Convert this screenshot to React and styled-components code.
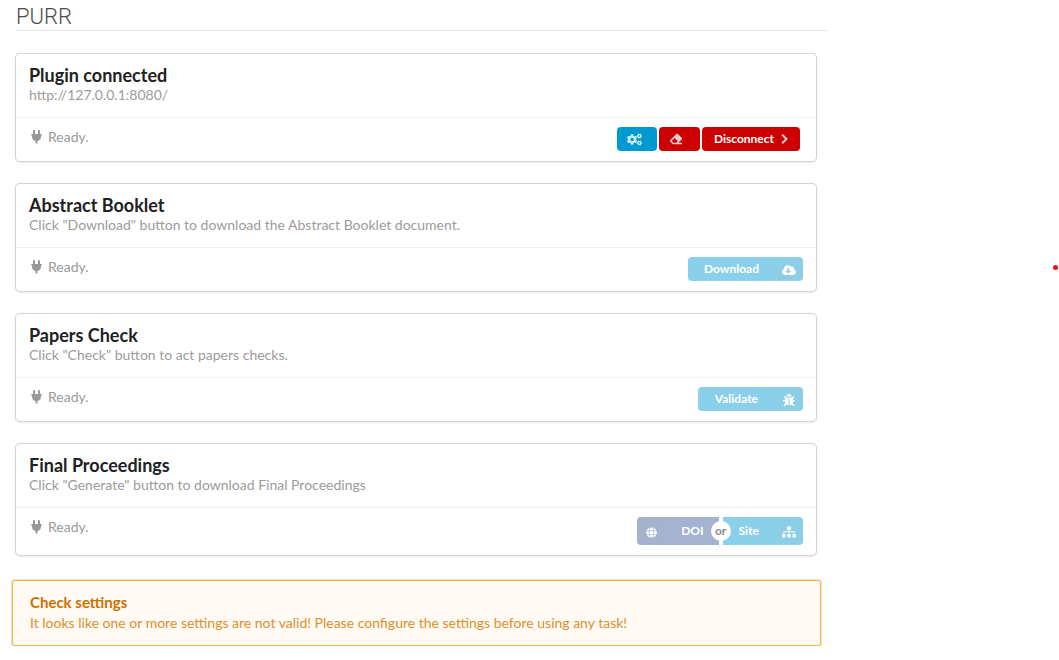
import React from "react";
import styled, { createGlobalStyle } from "styled-components";
import {
  FaCogs,
  FaEraser,
  FaCloudDownloadAlt,
  FaBug,
  FaGlobe,
  FaSitemap,
} from "react-icons/fa";

const GlobalStyle = createGlobalStyle`
  *, *::before, *::after { box-sizing: border-box; }
  body {
    margin: 0;
    background: #fff;
    color: #212121;
    font-family: Lato, "Open Sans", sans-serif;
    font-size: 14px;
    line-height: 20px;
  }
  h1, h2, p { margin: 0; }
`;

const Page = styled.div`
  display: grid;
  grid-template-columns: minmax(0, 1fr) 231px;
`;

const Main = styled.main`
  display: flex;
  flex-direction: column;
  padding-left: 16px;
`;

const Margin = styled.aside`
  display: flex;
  justify-content: flex-end;
  padding: 265px 1px 0 0;
`;

const Dot = styled.span`
  width: 5px;
  height: 5px;
  border-radius: 50%;
  background: #ee1111;
`;

const PageTitle = styled.h1`
  padding: 5px 0 1px;
  border-bottom: 1px solid #e8e8e8;
  color: #4c4c4c;
  font-family: Roboto, sans-serif;
  font-size: 22px;
  font-weight: 300;
  line-height: 24px;
`;

const Cards = styled.div`
  display: flex;
  flex-direction: column;
  gap: 23px;
  margin: 23px 12px 0 0;
`;

const Card = styled.section`
  border-radius: 4px;
  background: #fff;
  box-shadow: 0 1px 3px 0 #d4d4d5, 0 0 0 1px #d4d4d5;
`;

const CardContent = styled.div`
  padding: 10px 13px 13px;
`;

const CardTitle = styled.h2`
  color: #212121;
  font-size: 18px;
  font-weight: 700;
  line-height: 22px;
`;

const CardText = styled.p`
  color: #9b9b9b;
  line-height: 18px;
`;

const CardFooter = styled.div`
  display: flex;
  align-items: flex-start;
  justify-content: space-between;
  padding: 9px 13px 10px 15px;
  border-top: 1px solid #f0f0f0;
`;

const Status = styled.p`
  display: flex;
  align-items: center;
  gap: 6px;
  color: #999;
`;

const Actions = styled.div`
  display: flex;
  gap: ${(p) => p.$gap || 0}px;
  padding-right: ${(p) => p.$inset || 0}px;
`;

const Button = styled.button`
  display: flex;
  align-items: center;
  height: ${(p) => (p.$tall ? 28 : 24)}px;
  padding: ${(p) => p.$padding || "0"};
  border: 0;
  border-radius: ${(p) => p.$radius || "4px"};
  overflow: hidden;
  background: ${(p) => p.$color};
  color: #fff;
  font-family: inherit;
  font-size: 12px;
  font-weight: 700;
  line-height: 12px;

  &:disabled {
    opacity: 0.45;
  }
`;

const FaintIcon = styled.span`
  display: flex;
  opacity: 0.8;
`;

const ButtonLabel = styled.span`
  flex: 1;
  padding: ${(p) => p.$padding};
`;

const IconBox = styled.span`
  display: flex;
  align-items: center;
  justify-content: center;
  width: 28px;
  height: 100%;
  padding-top: 2px;
  background: rgba(0, 0, 0, 0.03);
`;

const Or = styled.span`
  position: relative;
  width: 4px;

  &::before {
    content: "or";
    position: absolute;
    z-index: 1;
    top: 4px;
    left: -8px;
    width: 20px;
    height: 20px;
    border-radius: 50%;
    background: #fff;
    color: #8c8c8c;
    font-size: 12px;
    font-weight: 700;
    line-height: 20px;
    text-align: center;
  }
`;

const Warning = styled.section`
  margin: 25px 7px 0 -4px;
  padding: 11px 17px 12px;
  border: 1px solid #fbb633;
  border-radius: 3px;
  background: #fffaf3;
  box-shadow: 0 0 0 1px #e6dfd8;
  color: #db902c;
`;

const WarningTitle = styled.h2`
  color: #cc7000;
  font-size: 15px;
  font-weight: 700;
  line-height: 21px;
`;

const WarningText = styled.p`
  line-height: 20px;
`;

function Plug() {
  return (
    <svg width="11" height="14" viewBox="0 0 11 14" fill="currentColor" aria-hidden="true">
      <path d="M2 1a1 1 0 0 1 2 0v3H2zM7 1a1 1 0 0 1 2 0v3H7z" />
      <path d="M.2 4h10.600v1.500H10v1.200c0 2.300-1.300 3.900-3.500 4.300v2.500h-2V11C2.300 10.600 1 9 1 6.700V5.500H.2z" />
    </svg>
  );
}

function Chevron() {
  return (
    <svg width="7" height="10" viewBox="0 0 7 10" fill="none" stroke="currentColor" strokeWidth="2" aria-hidden="true">
      <path d="M1.200 0.800 5.500 5 1.200 9.200" />
    </svg>
  );
}

function TaskCard({ title, text, children }) {
  return (
    <Card>
      <CardContent>
        <CardTitle>{title}</CardTitle>
        <CardText>{text}</CardText>
      </CardContent>
      <CardFooter>
        <Status>
          <Plug />
          Ready.
        </Status>
        {children}
      </CardFooter>
    </Card>
  );
}

export default function App() {
  return (
    <>
      <GlobalStyle />
      <Page>
        <Main>
          <PageTitle>PURR</PageTitle>
          <Cards>
            <TaskCard title="Plugin connected" text="http://127.0.0.1:8080/">
              <Actions $gap={2} $inset={3}>
                <Button type="button" aria-label="Settings" $color="#0099d1" $padding="0 15px 0 10px">
                  <FaintIcon><FaCogs size={15} /></FaintIcon>
                </Button>
                <Button type="button" aria-label="Clear" $color="#cc0000" $padding="0 18px 0 11px">
                  <FaintIcon><FaEraser size={12} /></FaintIcon>
                </Button>
                <Button type="button" $color="#cc0000" $padding="0 12px">
                  <ButtonLabel $padding="0 7px 0 0">Disconnect</ButtonLabel>
                  <FaintIcon><Chevron /></FaintIcon>
                </Button>
              </Actions>
            </TaskCard>
            <TaskCard
              title="Abstract Booklet"
              text={'Click "Download" button to download the Abstract Booklet document.'}
            >
              <Actions>
                <Button type="button" disabled $color="#0099d1">
                  <ButtonLabel $padding="0 16px">Download</ButtonLabel>
                  <IconBox><FaCloudDownloadAlt size={14} /></IconBox>
                </Button>
              </Actions>
            </TaskCard>
            <TaskCard title="Papers Check" text={'Click "Check" button to act papers checks.'}>
              <Actions>
                <Button type="button" disabled $color="#0099d1">
                  <ButtonLabel $padding="0 17px">Validate</ButtonLabel>
                  <IconBox><FaBug size={12} /></IconBox>
                </Button>
              </Actions>
            </TaskCard>
            <TaskCard
              title="Final Proceedings"
              text={'Click "Generate" button to download Final Proceedings'}
            >
              <Actions>
                <Button type="button" disabled $tall $radius="4px 0 0 4px" $color="#3b5998">
                  <IconBox><FaGlobe size={11} /></IconBox>
                  <ButtonLabel $padding="0 15px 0 16px">DOI</ButtonLabel>
                </Button>
                <Or />
                <Button type="button" disabled $tall $radius="0 4px 4px 0" $color="#0099d1">
                  <ButtonLabel $padding="0 16px">Site</ButtonLabel>
                  <IconBox><FaSitemap size={14} /></IconBox>
                </Button>
              </Actions>
            </TaskCard>
          </Cards>
          <Warning>
            <WarningTitle>Check settings</WarningTitle>
            <WarningText>
              It looks like one or more settings are not valid! Please configure the settings before using any task!
            </WarningText>
          </Warning>
        </Main>
        <Margin>
          <Dot />
        </Margin>
      </Page>
    </>
  );
}
